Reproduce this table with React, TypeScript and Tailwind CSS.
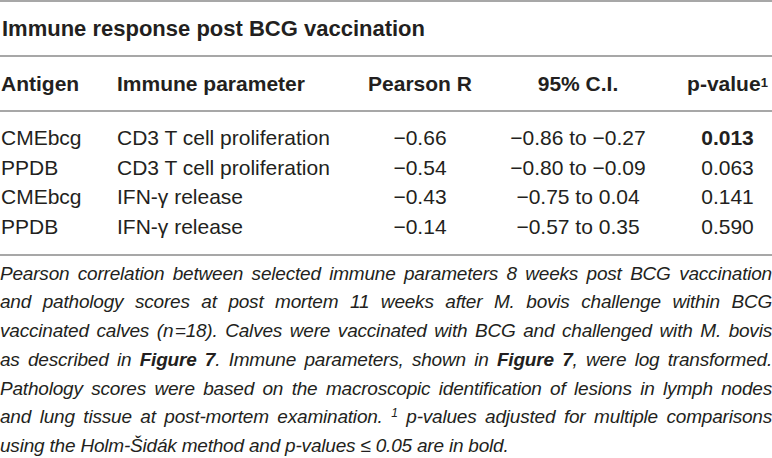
const rows = [
  { antigen: "CMEbcg", param: "CD3 T cell proliferation", r: "−0.66", ci: "−0.86 to −0.27", p: "0.013", bold: true },
  { antigen: "PPDB", param: "CD3 T cell proliferation", r: "−0.54", ci: "−0.80 to −0.09", p: "0.063", bold: false },
  { antigen: "CMEbcg", param: "IFN-γ release", r: "−0.43", ci: "−0.75 to 0.04", p: "0.141", bold: false },
  { antigen: "PPDB", param: "IFN-γ release", r: "−0.14", ci: "−0.57 to 0.35", p: "0.590", bold: false },
];

const grid = "grid grid-cols-[117px_250px_106px_210px_89px]";
const line = "block text-justify [text-align-last:justify] whitespace-nowrap";

export default function App() {
  return (
    <div className="w-[772px] h-[458px] bg-white text-[#231f20] font-['Liberation_Sans',Arial,sans-serif] overflow-hidden">
      <div className="border-t-2 border-[#a7a7a7]" />
      <div className="h-[53px] flex items-center pl-[2px] text-[22px] font-bold">
        Immune response post BCG vaccination
      </div>
      <div className="border-t-2 border-[#a7a7a7]" />
      <div className={`${grid} h-[53px] items-center text-[21px] font-bold`}>
        <div className="pl-[1px]">Antigen</div>
        <div>Immune parameter</div>
        <div className="text-center">Pearson R</div>
        <div className="text-center">95% C.I.</div>
        <div className="text-center">
          p-value<sup className="text-[13px] relative -top-[4px]">1</sup>
        </div>
      </div>
      <div className="border-t-2 border-[#a7a7a7]" />
      <div className="pt-[10px] pb-[13px]">
        {rows.map((row, i) => (
          <div key={i} className={`${grid} h-[29.7px] items-center text-[21px]`}>
            <div className="pl-[1px]">{row.antigen}</div>
            <div>{row.param}</div>
            <div className="text-center">{row.r}</div>
            <div className="text-center">{row.ci}</div>
            <div className={`text-center ${row.bold ? "font-bold" : ""}`}>{row.p}</div>
          </div>
        ))}
      </div>
      <div className="border-t-2 border-[#a7a7a7]" />
      <p className="italic text-[19px] tracking-[-0.2px] leading-[28.7px] pt-[4px]">
        <span className={line}>
          Pearson correlation between selected immune parameters 8 weeks post BCG vaccination
        </span>
        <span className={line}>
          and pathology scores at post mortem 11 weeks after M. bovis challenge within BCG
        </span>
        <span className={line}>
          vaccinated calves (<i>n</i>&#8202;=18). Calves were vaccinated with BCG and challenged with M. bovis
        </span>
        <span className={line}>
          as described in <b>Figure 7</b>. Immune parameters, shown in <b>Figure 7</b>, were log transformed.
        </span>
        <span className={line}>
          Pathology scores were based on the macroscopic identification of lesions in lymph nodes
        </span>
        <span className={line}>
          and lung tissue at post-mortem examination. <sup className="text-[12px]">1</sup> p-values adjusted
          for multiple comparisons
        </span>
        <span className="block whitespace-nowrap">
          using the Holm-Šidák method and p-values ≤ 0.05 are in bold.
        </span>
      </p>
    </div>
  );
}
